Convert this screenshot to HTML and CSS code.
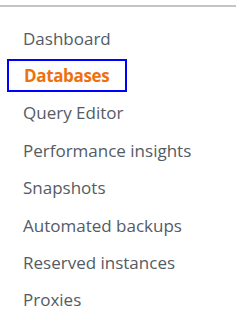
FILE: index.html
```html
<!DOCTYPE html>
<html lang="en">
<head>
    <meta charset="UTF-8">
    <meta name="viewport" content="width=device-width, initial-scale=1.0">
    <title>RDS Navigation</title>
    <link rel="stylesheet" href="styles.css">
</head>
<body>
    <div class="divider"></div>

    <!-- Side navigation -->
    <ul class="nav">
        <li><a href="#">Dashboard</a></li>
        <li class="active"><a href="#">Databases</a></li>
        <li><a href="#">Query Editor</a></li>
        <li><a href="#">Performance insights</a></li>
        <li><a href="#">Snapshots</a></li>
        <li><a href="#">Automated backups</a></li>
        <li><a href="#">Reserved instances</a></li>
        <li><a href="#">Proxies</a></li>
    </ul>
</body>
</html>
```

FILE: styles.css
```css
* {
    box-sizing: border-box;
    margin: 0;
    padding: 0;
}

body {
    background: #ffffff;
    font-family: 'Open Sans', sans-serif;
    width: 241px;
    height: 332px;
    overflow: hidden;
}

.divider {
    margin-top: 5px;
    width: 236px;
    height: 2px;
    background: #c4c4c4;
}

.nav {
    list-style: none;
    padding: 14.5px 0 0 7px;
    display: flex;
    flex-direction: column;
    gap: 4.43px;
}

.nav li {
    height: 33px;
    display: flex;
    align-items: center;
}

.nav a {
    display: block;
    padding: 0 14px;
    line-height: 29px;
    font-size: 17px;
    color: #545b64;
    text-decoration: none;
    border: 2px solid transparent;
}

.nav .active a {
    padding: 0 16px 0 15px;
    color: #ec7211;
    font-weight: bold;
    letter-spacing: -0.35px;
    border-color: #0000ff;
}
```
